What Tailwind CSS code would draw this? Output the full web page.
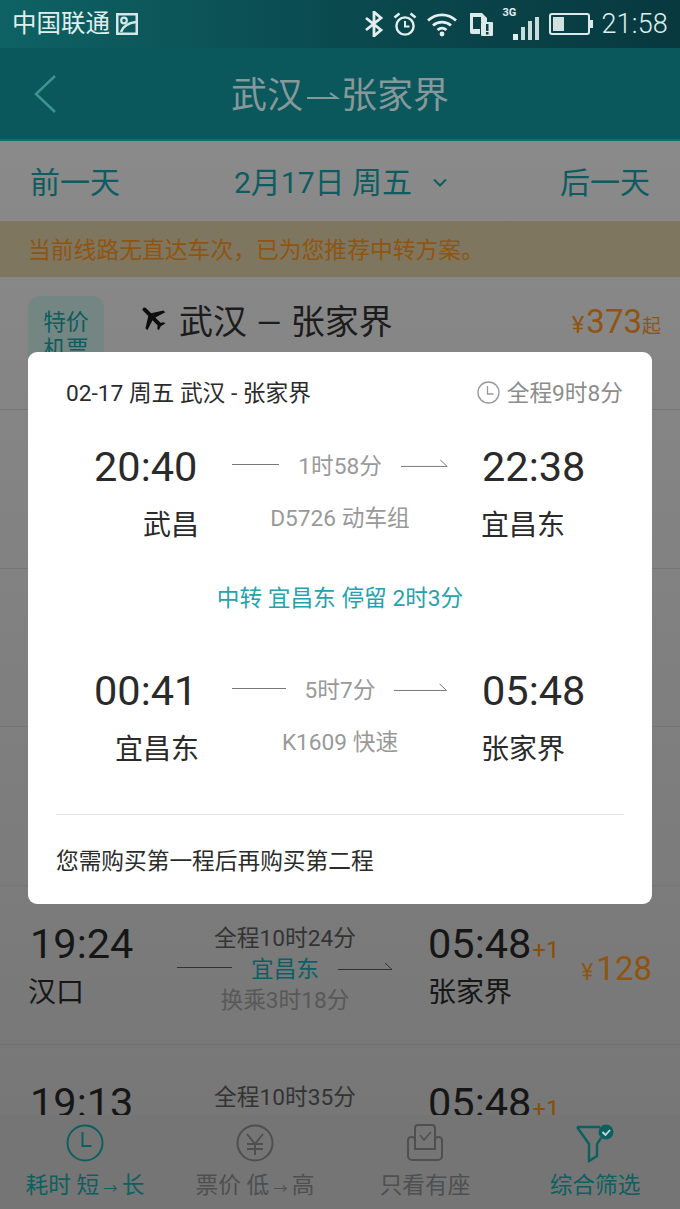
<!DOCTYPE html>
<html lang="zh-CN">
<head>
    <meta charset="UTF-8">
    <meta name="viewport" content="width=device-width, initial-scale=1.0">
    <title>武汉 → 张家界</title>
    <script src="https://cdn.jsdelivr.net/npm/@tailwindcss/browser@4"></script>
</head>
<body class="font-['Roboto','Noto_Sans_CJK_SC',sans-serif] bg-[#7f7f7f]">
<div class="relative w-[680px] h-[1209px] overflow-hidden flex flex-col">

    <!-- status bar -->
    <div class="h-[48px] shrink-0 flex items-center justify-between pl-[12px] pr-[12px] bg-linear-to-r from-[#0e6264] via-[#0a4a4f] to-[#07393f] text-[#dfeeee]">
        <div class="flex items-center gap-[5px]">
            <span class="text-[24.5px] leading-none">中国联通</span>
            <svg class="w-[24px] h-[24px]" viewBox="0 0 24 24"><rect x="1" y="1" width="22" height="22" fill="#d5e6e6"/><rect x="3.500" y="3.500" width="17" height="17" fill="#0d5a5e"/><circle cx="9" cy="8.500" r="2.800" fill="none" stroke="#d5e6e6" stroke-width="2.200"/><path d="M6 20c2-6 7-9 15-10" fill="none" stroke="#d5e6e6" stroke-width="2.600"/></svg>
        </div>
        <div class="flex items-center">
            <svg class="w-[20px] h-[26px]" viewBox="0 0 20 26" fill="none" stroke="#e3eeee" stroke-width="2.800"><path d="M2 7l15 12-7 6V1l7 6L2 19"/></svg>
            <svg class="w-[26px] h-[26px] ml-[8px]" viewBox="0 0 26 26" fill="none" stroke="#e3eeee" stroke-width="2.400"><circle cx="13" cy="15" r="8.600"/><path d="M13 10v5.500h4.500" stroke-width="2"/><path d="M2.500 6.500l5-4M23.500 6.500l-5-4" stroke-width="2.600"/></svg>
            <svg class="w-[32px] h-[26px] ml-[8px]" viewBox="0 0 32 26" fill="none" stroke="#e3eeee" stroke-width="2.800"><path d="M2 9.500c8-7.500 20-7.500 28 0"/><path d="M7 14.500c5-4.500 13-4.500 18 0"/><path d="M11.500 19c3-2.500 6-2.500 9 0"/><circle cx="16" cy="23" r="2.400" fill="#e3eeee" stroke="none"/></svg>
            <svg class="w-[24px] h-[26px] ml-[11px]" viewBox="0 0 24 26"><path d="M1 2h12l5 5v4h-7v12H3a2 2 0 0 1-2-2z" fill="#dce9e9"/><rect x="4" y="6" width="8" height="12" fill="#0a4146"/><rect x="12" y="11" width="12" height="14" rx="1" fill="#dce9e9"/><rect x="17" y="13" width="2.500" height="7" fill="#0a4146"/><rect x="17" y="21" width="2.500" height="2.500" fill="#0a4146"/></svg>
            <div class="relative w-[37px] h-[32px] ml-[9px]">
                <span class="absolute left-0 top-[-2px] text-[11px] font-bold leading-[14px] text-[#e3eeee]">3G</span>
                <div class="absolute inset-0 flex items-end justify-end gap-[3px]">
                    <i class="block w-[5px] h-[6px] bg-[#e3eeee]"></i>
                    <i class="block w-[4px] h-[13px] bg-[#c9dcdc]"></i>
                    <i class="block w-[4px] h-[19px] bg-[#c9dcdc]"></i>
                    <i class="block w-[4px] h-[23px] bg-[#c9dcdc]"></i>
                </div>
            </div>
            <svg class="w-[44px] h-[22px] ml-[10px]" viewBox="0 0 44 22"><rect x="1" y="1" width="39" height="20" rx="2" fill="none" stroke="#dce9e9" stroke-width="2"/><rect x="4" y="4" width="11" height="14" fill="#d3e0e0"/><rect x="41" y="7" width="3" height="8" fill="#dce9e9"/></svg>
            <span class="ml-[8px] text-[27px] leading-none font-light tracking-[0.2px] text-[#dfeeee]">21:58</span>
        </div>
    </div>

    <!-- title bar -->
    <div class="relative h-[93px] shrink-0 flex items-center justify-center pt-[5px] bg-[#0a585c] border-b-[2px] border-[#0d6f74]">
        <svg class="absolute left-[33px] top-[26px] w-[24px] h-[40px]" viewBox="0 0 24 40" fill="none" stroke="#3f928f" stroke-width="2.500"><path d="M22 2L3 20l19 18"/></svg>
        <span class="text-[36px] leading-none text-[#86989a]">武汉</span>
        <svg class="w-[38px] h-[16px]" viewBox="0 0 38 16" fill="none" stroke="#86989a" stroke-width="2"><path d="M4 10h30l-7-5"/></svg>
        <span class="text-[36px] leading-none text-[#86989a]">张家界</span>
    </div>

    <!-- list -->
    <div class="flex-1 min-h-0 overflow-hidden bg-linear-to-b from-[#8a8a8a] to-[#777777]">
        <div class="h-[80px] flex items-center justify-between pt-[4px] px-[30px] text-[30px] leading-none text-[#0d5c61]">
            <span>前一天</span>
            <span class="flex items-center ml-[2px]">2月17日 周五
                <svg class="w-[16px] h-[10px] ml-[20px]" viewBox="0 0 16 10" fill="none" stroke="#0d5c61" stroke-width="2"><path d="M2 1.500l6 6 6-6"/></svg>
            </span>
            <span>后一天</span>
        </div>

        <div class="h-[56px] flex items-center pt-[4px] pl-[28px] bg-[#7f765f] text-[22.800px] leading-none text-[#8f5510]">当前线路无直达车次，已为您推荐中转方案。</div>

        <div class="h-[133px] flex items-start pt-[19px] pl-[28px] pr-[19px] border-b border-[#757575]">
            <div class="w-[76px] h-[100px] rounded-[12px] bg-[#748681] pt-[13px] text-center text-[22.700px] leading-[27px] text-[#0d5c5e]">特价<br>机票</div>
            <svg class="w-[32px] h-[32px] ml-[33px] mt-[5px] -rotate-45" viewBox="0 0 24 24" fill="#0d0d0d"><path d="M21 16v-2l-8-5V3.500c0-.83-.67-1.500-1.500-1.500S10 2.670 10 3.500V9l-8 5v2l8-2.500V19l-2 1.500V22l3.500-1 3.500 1v-1.500L13 19v-5.500l8 2.500z"/></svg>
            <span class="ml-[10px] mt-[6px] text-[34px] leading-[40px] text-[#1c1c1c] whitespace-nowrap">武汉 <span class="mx-[1px] text-[32px]">—</span> 张家界</span>
            <div class="ml-auto flex items-baseline text-[#8f5510] mt-[6px]">
                <span class="text-[24px] mr-[2px]">¥</span>
                <span class="text-[33px] leading-[40px]">373</span>
                <span class="text-[19px]">起</span>
            </div>
        </div>

        <!-- rows covered by the dialog -->
        <div class="h-[159px] border-b border-[#757575]"></div>
        <div class="h-[158px] border-b border-[#757575]"></div>
        <div class="h-[159px] border-b border-[#757575]"></div>

        <div class="h-[159px] flex pl-[28px] pr-[28px] border-b border-[#6f6f6f]">
            <div class="w-[149px] pt-[33px]">
                <div class="pl-[2px] text-[41.500px] leading-[50px] text-[#161616]">19:24</div>
                <div class="text-[28px] leading-[48px] text-[#161616]">汉口</div>
            </div>
            <div class="w-[216px] pt-[37px] text-center text-[22.700px] leading-[31px]">
                <div class="text-[#333333]">全程10时24分</div>
                <div class="flex items-center justify-between text-[#0d5f63]">
                    <span class="block w-[55px] h-px bg-[#333333] -mt-[4px]"></span>
                    <span>宜昌东</span>
                    <svg class="w-[55px] h-[10px] -mt-[8px]" viewBox="0 0 55 10" fill="none" stroke="#333333"><path d="M0 8.500h54L47 2"/></svg>
                </div>
                <div class="text-[#585858]">换乘3时18分</div>
            </div>
            <div class="w-[150px] ml-[35px] pt-[33px]">
                <div class="text-[41.500px] leading-[50px] text-[#161616] whitespace-nowrap">05:48<span class="ml-[1px] text-[24px] leading-none text-[#84500c]">+1</span></div>
                <div class="text-[28px] leading-[48px] text-[#161616]">张家界</div>
            </div>
            <div class="ml-auto flex items-baseline self-start mt-[63px] text-[#8f5510]">
                <span class="text-[23px] mr-[3px]">¥</span>
                <span class="text-[33px] leading-[40px]">128</span>
            </div>
        </div>

        <div class="h-[159px] flex pl-[28px] pr-[28px]">
            <div class="w-[149px] pl-[2px] pt-[33px] text-[41.500px] leading-[50px] text-[#161616]">19:13</div>
            <div class="w-[216px] pt-[37px] text-center text-[22.700px] leading-[31px] text-[#333333]">全程10时35分</div>
            <div class="w-[150px] ml-[35px] pt-[33px] text-[41.500px] leading-[50px] text-[#161616] whitespace-nowrap">05:48<span class="ml-[1px] text-[24px] leading-none text-[#84500c]">+1</span></div>
        </div>
    </div>

    <!-- bottom tabs -->
    <div class="h-[94px] shrink-0 grid grid-cols-4 bg-[#757575] text-[22.700px] leading-[30px] text-center">
        <div class="flex flex-col items-center pt-[8px] text-[#0d6060]">
            <svg class="w-[40px] h-[40px]" viewBox="0 0 40 40" fill="none" stroke="#0d6060" stroke-width="2"><circle cx="20" cy="20" r="17.500"/><path d="M17.500 9v14h9"/></svg>
            <span class="mt-[8px]">耗时 短<span class="inline-block w-[22.700px] text-[14px]">→</span>长</span>
        </div>
        <div class="flex flex-col items-center pt-[8px] text-[#4f4f4f]">
            <svg class="w-[40px] h-[40px]" viewBox="0 0 40 40" fill="none" stroke="#4f4f4f" stroke-width="2"><circle cx="20" cy="20" r="17.500"/><path d="M12 11l8 10 8-10M12 21h16M12 26h16M20 21v11"/></svg>
            <span class="mt-[8px]">票价 低<span class="inline-block w-[22.700px] text-[14px]">→</span>高</span>
        </div>
        <div class="flex flex-col items-center pt-[8px] text-[#4f4f4f]">
            <svg class="w-[40px] h-[40px]" viewBox="0 0 40 40" fill="none" stroke="#4f4f4f" stroke-width="2"><path d="M10 18V5a3 3 0 0 1 3-3h14a3 3 0 0 1 3 3v13"/><path d="M10 18a3 3 0 0 0-7-1v16a4 4 0 0 0 4 4h26a4 4 0 0 0 4-4V17a3 3 0 0 0-7 1v8H10z"/><path d="M15 12l4 5 7-8" stroke-width="1.500"/></svg>
            <span class="mt-[8px]">只看有座</span>
        </div>
        <div class="flex flex-col items-center pt-[8px] text-[#0d6060]">
            <svg class="w-[40px] h-[40px]" viewBox="0 0 40 40" fill="none" stroke="#0d6060" stroke-width="2.400"><path d="M2 4h23M2 4l12 17v17l8-5V21l4-6"/><circle cx="31" cy="9" r="7.500" fill="#0d6060" stroke="none"/><path d="M27.500 9l3 3 4.500-5" stroke="#c8dcdc" stroke-width="1.800"/></svg>
            <span class="mt-[8px]">综合筛选</span>
        </div>
    </div>

    <!-- dialog -->
    <div class="absolute left-[28px] top-[352px] w-[624px] h-[552px] rounded-[9px] bg-white">
        <div class="h-[80px] flex items-center justify-between pt-[4px] pl-[38px] pr-[29px]">
            <span class="text-[22.700px] leading-none text-[#2b2b2b]">02-17 周五 武汉 - 张家界</span>
            <span class="flex items-center text-[22.700px] leading-none text-[#8c8c8c]">
                <svg class="w-[23px] h-[23px] mr-[7px] -mt-[3px]" viewBox="0 0 23 23" fill="none" stroke="#999999" stroke-width="1.300"><circle cx="11.500" cy="11.500" r="10.500"/><path d="M10.500 5v8h6"/></svg>
                全程9时8分
            </span>
        </div>

        <div class="grid grid-cols-[105px_216px_1fr] grid-rows-[70px_44px] gap-x-[33px] pl-[66px]">
            <div class="text-[41.500px] leading-[70px] text-[#2a2a2a]">20:40</div>
            <div class="flex items-center text-[22.700px] text-[#999999]">
                <span class="flex-1 h-px bg-[#777777] -mt-[6px]"></span>
                <span class="px-[19px]">1时58分</span>
                <svg class="flex-1 h-[12px] -mt-[10px]" viewBox="0 0 48 12" fill="none" stroke="#777777"><path d="M0 10.500h47L40 4"/></svg>
            </div>
            <div class="pl-[1px] text-[41.500px] leading-[70px] text-[#2a2a2a]">22:38</div>
            <div class="text-right text-[28px] leading-[48px] text-[#2a2a2a]">武昌</div>
            <div class="text-center text-[22.700px] leading-[34px] text-[#999999]">D5726 动车组</div>
            <div class="text-[28px] leading-[48px] text-[#2a2a2a]">宜昌东</div>
        </div>

        <div class="h-[110px] flex items-center justify-center pb-[4px] text-[22.700px] text-[#22a3ae]">中转 宜昌东 停留 2时3分</div>

        <div class="grid grid-cols-[105px_216px_1fr] grid-rows-[70px_44px] gap-x-[33px] pl-[66px]">
            <div class="text-[41.500px] leading-[70px] text-[#2a2a2a]">00:41</div>
            <div class="flex items-center text-[22.700px] text-[#999999]">
                <span class="flex-1 h-px bg-[#777777] -mt-[6px]"></span>
                <span class="px-[19px]">5时7分</span>
                <svg class="flex-1 h-[12px] -mt-[10px]" viewBox="0 0 54 12" fill="none" stroke="#777777"><path d="M0 10.500h53L46 4"/></svg>
            </div>
            <div class="pl-[1px] text-[41.500px] leading-[70px] text-[#2a2a2a]">05:48</div>
            <div class="text-right text-[28px] leading-[48px] text-[#2a2a2a]">宜昌东</div>
            <div class="text-center text-[22.700px] leading-[34px] text-[#999999]">K1609 快速</div>
            <div class="text-[28px] leading-[48px] text-[#2a2a2a]">张家界</div>
        </div>

        <div class="mt-[44px] mx-[28px] border-t border-[#e4e4e4] h-[89px] flex items-center pt-[7px] text-[22.700px] text-[#2b2b2b]">您需购买第一程后再购买第二程</div>
    </div>
</div>
</body>
</html>
